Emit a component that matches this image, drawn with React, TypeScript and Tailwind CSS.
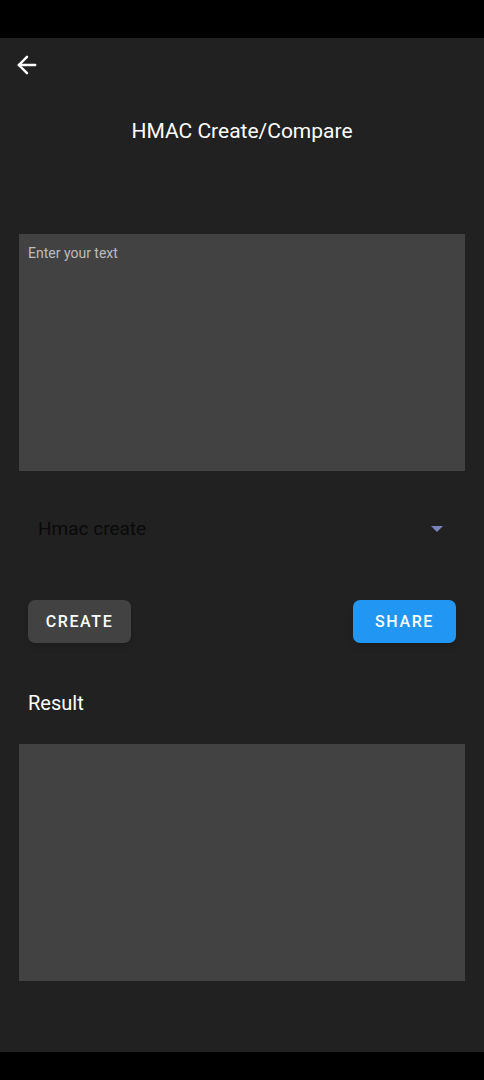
import { ArrowLeft } from "lucide-react";

export default function App() {
  return (
    <div
      className="w-[484px] h-[1080px] bg-black flex flex-col"
      style={{ fontFamily: "Roboto, 'Noto Sans', sans-serif" }}
    >
      <div className="h-[38px] shrink-0" />
      <div className="flex-1 bg-[#212121] flex flex-col">
        {/* app bar */}
        <div className="h-[54px] flex items-center pl-[13px]">
          <ArrowLeft className="w-[28px] h-[28px] text-white" strokeWidth={2.1} />
        </div>
        <div className="h-[79px] flex items-center justify-center">
          <h1 className="text-white text-[21px] leading-none">HMAC Create/Compare</h1>
        </div>

        <div className="mt-[63px] mx-[19px] h-[237px] bg-[#424242] px-[9px] pt-[12px]">
          <p className="text-[14px] text-[#bdbdbd] leading-none">Enter your text</p>
        </div>

        {/* dropdown */}
        <div className="mt-[38px] mx-[38px] h-[40px] flex items-center justify-between">
          <span className="text-[19px] text-[#0a0a0a]">Hmac create</span>
          <svg width="12" height="7" viewBox="0 0 12 7" className="mr-[3px]">
            <path d="M0 0 L12 0 L6 6 Z" fill="#7b83b8" />
          </svg>
        </div>

        <div className="mt-[51px] mx-[28px] flex justify-between">
          <button className="w-[103px] h-[43px] rounded-[7px] bg-[#424242] text-white text-[16px] font-medium tracking-[1.6px] shadow-md">
            CREATE
          </button>
          <button className="w-[103px] h-[43px] rounded-[7px] bg-[#2196f3] text-white text-[16px] font-medium tracking-[1.6px] shadow-md">
            SHARE
          </button>
        </div>

        <div className="mt-[50px] mx-[28px] text-white text-[20px] leading-none">Result</div>

        <div className="mt-[31px] mx-[19px] h-[237px] bg-[#424242]" />
      </div>
      <div className="h-[28px] shrink-0" />
    </div>
  );
}
